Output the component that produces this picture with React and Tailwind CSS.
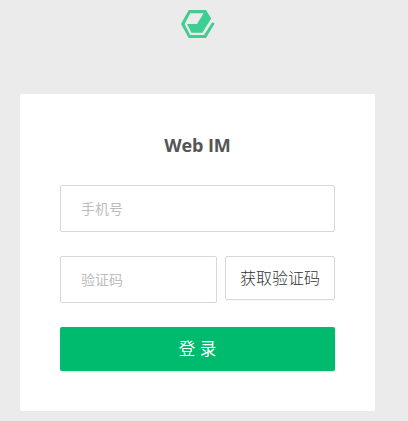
function Logo() {
  return (
    <svg className="block" width="35" height="30" viewBox="0 0 35 30" fill="#3dce91" aria-hidden="true">
      <path
        fillRule="evenodd"
        d="M8.7 1H26L31.2 9.6L22.4 23.7H11.4L7 15H17L23.6 4.3H10.2L4.6 15L10.2 26H24L32.3 13.2L34.6 14.6L26 29H8.7L1 15Z"
      />
    </svg>
  );
}

export default function App() {
  return (
    <div className="flex h-[421px] w-[408px] flex-col overflow-hidden bg-[#ebebeb] pl-5 pt-[9px] font-['Open_Sans','Noto_Sans_CJK_SC',sans-serif] text-[#555]">
      <header className="flex h-[85px] w-[355px] justify-center">
        <Logo />
      </header>
      <form className="flex h-[317px] w-[355px] flex-col rounded-[2px] bg-white px-10 pt-[39px]">
        <h1 className="mb-7 h-6 text-center text-[18px] font-bold leading-6 tracking-[-0.1px]">Web IM</h1>
        <input
          className="h-[47px] w-full rounded-[2px] border border-[#d8d8d8] px-5 text-[14px] outline-none placeholder:text-[#bdbdbd]"
          placeholder="手机号"
        />
        <div className="mt-6 flex items-start gap-2">
          <input
            className="h-[47px] w-[157px] rounded-[2px] border border-[#d8d8d8] px-5 text-[14px] outline-none placeholder:text-[#bdbdbd]"
            placeholder="验证码"
          />
          <button type="button" className="h-11 w-[110px] rounded-[2px] border border-[#d8d8d8] pb-0.5 font-['Noto_Sans_CJK_SC',sans-serif] text-[16px] font-light text-[#333] shadow-[0_1px_2px_rgba(0,0,0,0.04)]">
            获取验证码
          </button>
        </div>
        <button type="button" className="mt-6 h-11 w-full rounded-[2px] bg-[#00ba6e] text-[16.5px] text-white shadow-[0_1px_2px_rgba(0,0,0,0.12)]">
          登 录
        </button>
      </form>
    </div>
  );
}
